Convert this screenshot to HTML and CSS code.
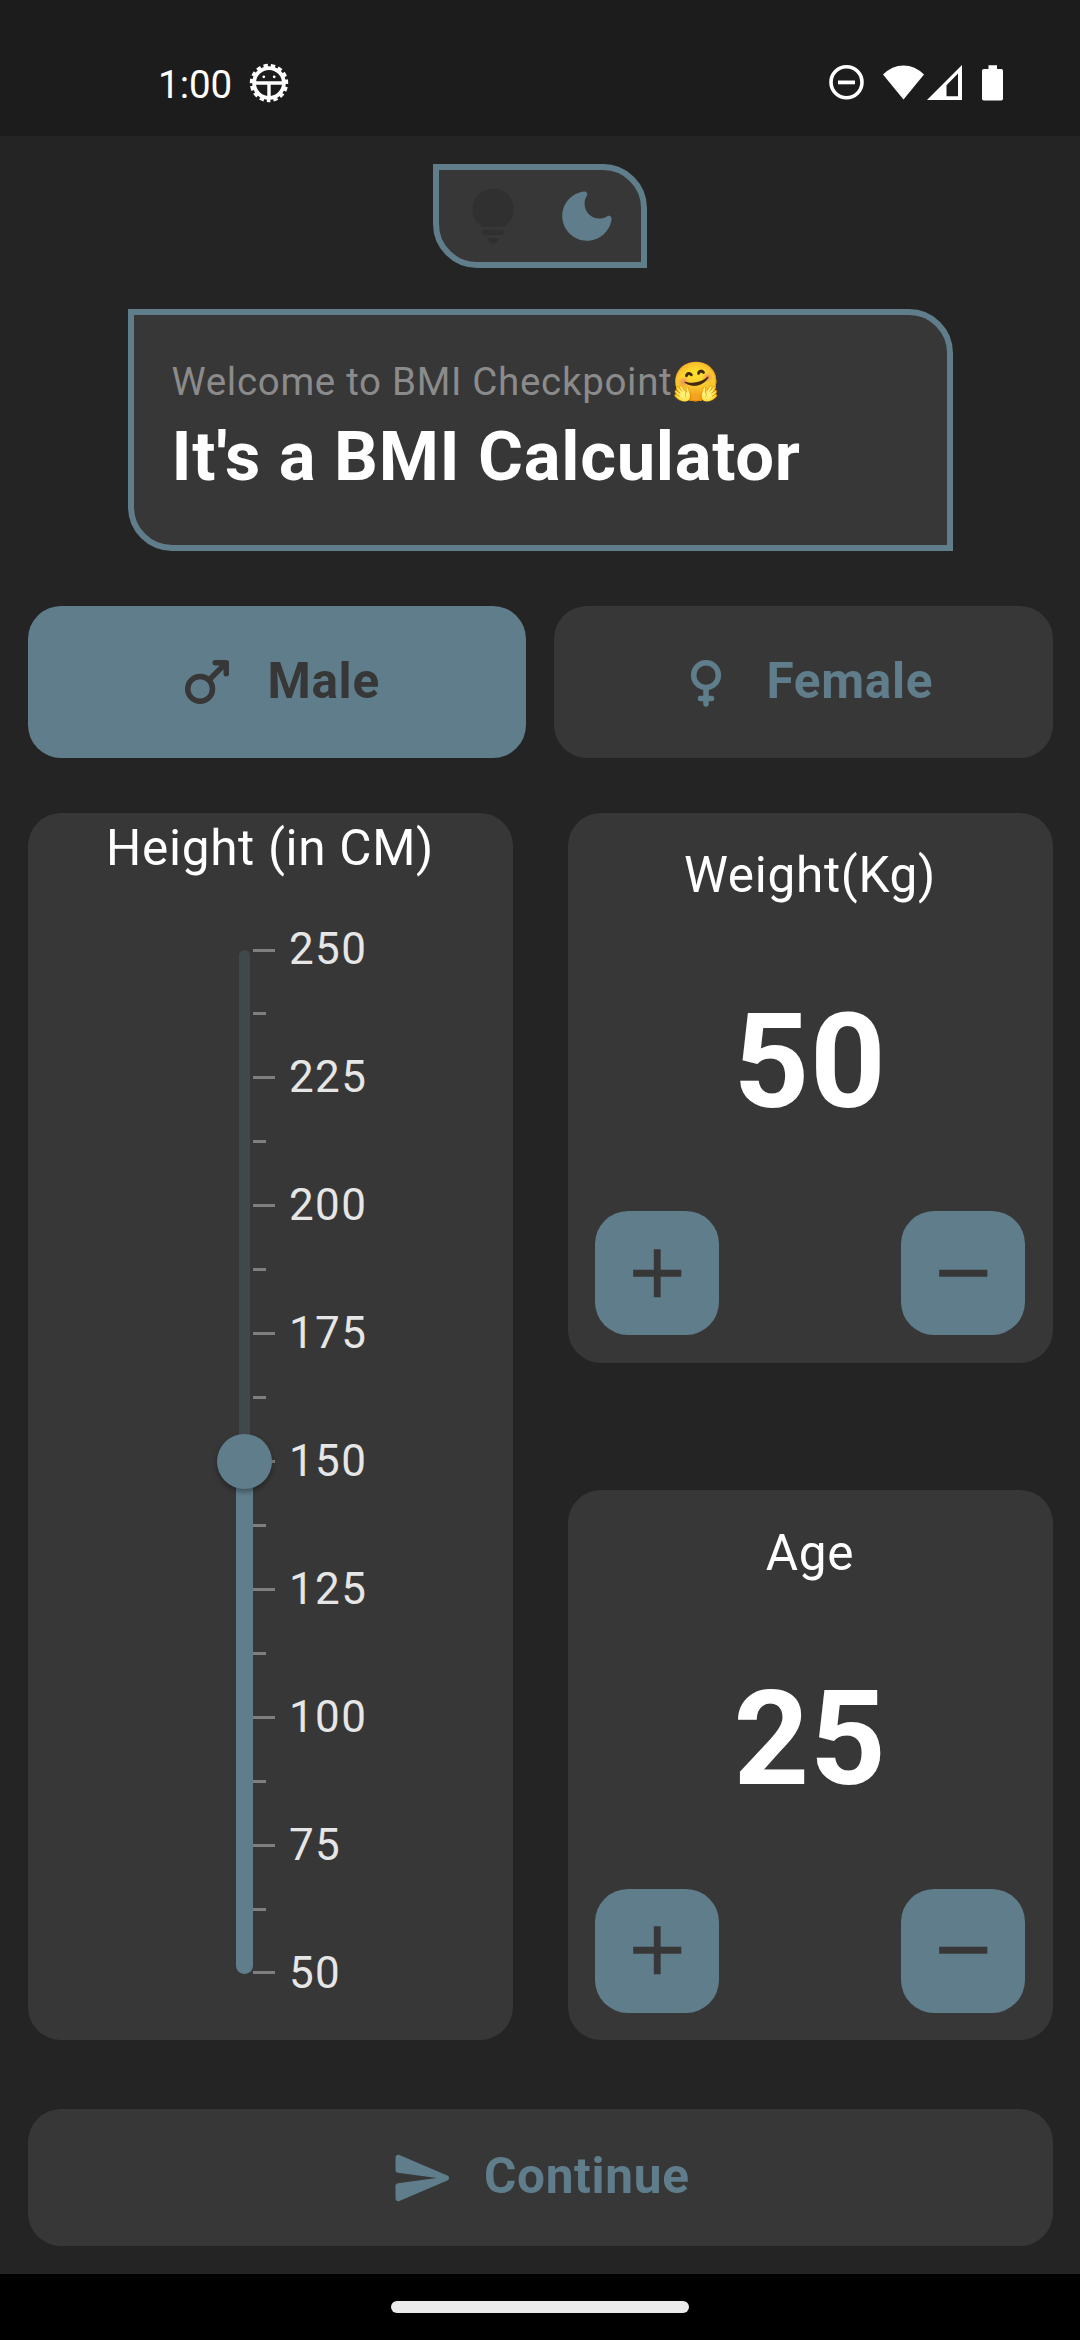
FILE: index.html
```html
<!DOCTYPE html>
<html lang="en">
<head>
<meta charset="utf-8">
<title>BMI Calculator</title>
<link rel="stylesheet" href="styles.css">
</head>
<body>
<header class="status">
  <span class="time">1:00</span>
  <svg class="gear" viewBox="-20 -20 40 40">
    <circle r="14.9" fill="none" stroke="#fff" stroke-width="3.8"/>
    <circle r="17" fill="none" stroke="#fff" stroke-width="4.4" stroke-dasharray="4.2 2.921" stroke-dashoffset="2.1" transform="rotate(90)"/>
    <path d="M-14 0H14M0 0V14" stroke="#fff" stroke-width="3.4" fill="none"/>
    <circle cx="-5.2" cy="-6.2" r="1.4" fill="#fff"/><circle cx="5.2" cy="-6.2" r="1.4" fill="#fff"/>
  </svg>
  <svg class="indicators" viewBox="0 0 178 40">
    <circle cx="18.5" cy="20.3" r="15.5" fill="none" stroke="#fff" stroke-width="3.6"/>
    <path d="M10 20.4H27" stroke="#fff" stroke-width="3.8"/>
    <path d="M55 12.5Q64 3.4 75.5 3.4T96 12.5L75.5 37.6Z" fill="#fff"/>
    <path fill-rule="evenodd" d="M99 38L134 3V38ZM118.5 23.2V34.3H130V11.5Z" fill="#fff"/>
    <path d="M160.5 3.3H169V7H173.3Q175 7 175 8.8V36.8Q175 38.6 173.3 38.6H155.8Q154 38.6 154 36.8V8.8Q154 7 155.8 7H160.5Z" fill="#fff"/>
  </svg>
</header>

<main class="screen">
  <div class="theme">
    <svg class="icon off" viewBox="0 0 24 24"><path d="M12 22c1.1 0 2-.9 2-2h-4c0 1.1.9 2 2 2zM9 19h6c.55 0 1-.45 1-1s-.45-1-1-1H9c-.55 0-1 .45-1 1s.45 1 1 1zM12 2a7.5 7.5 0 0 0-7.5 7.5c0 3.82 2.66 5.86 3.77 6.5h7.46c1.11-.64 3.77-2.68 3.77-6.5A7.5 7.5 0 0 0 12 2z"/></svg>
    <svg class="icon" viewBox="0 0 24 24"><path d="M11.01 3.05C6.51 3.54 3 7.36 3 12c0 4.97 4.03 9 9 9 4.63 0 8.45-3.5 8.95-8 .09-.79-.78-1.42-1.54-.95-.84.54-1.84.85-2.91.85-2.98 0-5.4-2.42-5.4-5.4 0-1.06.31-2.06.84-2.89.45-.67-.04-1.63-.93-1.56z"/></svg>
  </div>

  <section class="hello">
    <p class="welcome">Welcome to BMI Checkpoint<span class="emoji">🤗</span></p>
    <h1 class="title">It's a BMI Calculator</h1>
  </section>

  <div class="genders">
    <button class="gender selected">
      <svg class="icon line" viewBox="0 0 24 24"><circle cx="9.5" cy="14.5" r="4.5"/><path d="M13 11L18.6 5.4"/><path d="M15 5H19V9"/></svg>
      <span class="caption">Male</span>
    </button>
    <button class="gender">
      <svg class="icon line" viewBox="0 0 24 24"><circle cx="12" cy="9.5" r="4.5"/><path d="M12 14.5V20M10 18H14"/></svg>
      <span class="caption">Female</span>
    </button>
  </div>

  <div class="measures">
    <section class="card height">
      <h2 class="label">Height (in CM)</h2>
      <div class="slider">
        <div class="rail"><div class="fill" style="height:50%"></div><div class="thumb" style="bottom:50%"></div></div>
        <ol class="scale">
          <li>250</li><li></li><li>225</li><li></li><li>200</li><li></li><li>175</li><li></li><li>150</li><li></li><li>125</li><li></li><li>100</li><li></li><li>75</li><li></li><li>50</li>
        </ol>
      </div>
    </section>
    <div class="counters">
      <section class="card counter">
        <h2 class="label">Weight(Kg)</h2>
        <div class="value">50</div>
        <div class="steps">
          <button class="step"><svg class="add" viewBox="0 0 24 24"><path d="M19 13h-6v6h-2v-6H5v-2h6V5h2v6h6z"/></svg></button>
          <button class="step"><svg class="add" viewBox="0 0 24 24"><path d="M19 13H5v-2h14z"/></svg></button>
        </div>
      </section>
      <section class="card counter">
        <h2 class="label">Age</h2>
        <div class="value">25</div>
        <div class="steps">
          <button class="step"><svg class="add" viewBox="0 0 24 24"><path d="M19 13h-6v6h-2v-6H5v-2h6V5h2v6h6z"/></svg></button>
          <button class="step"><svg class="add" viewBox="0 0 24 24"><path d="M19 13H5v-2h14z"/></svg></button>
        </div>
      </section>
    </div>
  </div>

  <button class="continue">
    <svg class="icon" viewBox="0 0 24 24"><path d="M3.4 20.4l17.45-7.48c.81-.35.81-1.49 0-1.84L3.4 3.6c-.66-.29-1.39.2-1.39.91L2 9.12c0 .5.37.93.87.99L17 12 2.87 13.88c-.5.07-.87.5-.87 1l.01 4.61c0 .71.73 1.2 1.39.91z"/></svg>
    <span class="caption">Continue</span>
  </button>
</main>

<footer class="nav"><div class="pill"></div></footer>
</body>
</html>
```

FILE: styles.css
```css
:root {
  --bg: #242424;
  --card: #373737;
  --accent: #607d8b;
}
* { box-sizing: border-box; }
body {
  margin: 0;
  width: 1080px;
  height: 2340px;
  display: flex;
  flex-direction: column;
  overflow: hidden;
  background: var(--bg);
  color: #fff;
  font-family: Roboto, "Liberation Sans", sans-serif;
}
h1, h2, p, ol { margin: 0; padding: 0; }
button {
  border: 0;
  padding: 0;
  font: 700 49.5px/58px Roboto, "Liberation Sans", sans-serif;
  letter-spacing: .6875px;
}
svg { display: block; flex: none; }
.icon { width: 66px; height: 66px; fill: var(--accent); }
.off { fill: #303030; }
.line {
  fill: none;
  stroke: currentColor;
  stroke-width: 2;
  stroke-linecap: round;
  stroke-linejoin: round;
}
.caption { padding-bottom: 2.5px; }

.status {
  flex: none;
  height: 136px;
  display: flex;
  align-items: flex-start;
  padding: 62px 74px 0 158px;
  background: #1c1c1c;
}
.time { font-size: 38.5px; line-height: 45px; width: 91.3px; }
.gear { width: 40px; height: 40px; margin-top: 1.3px; }
.indicators { width: 178px; height: 40px; margin-left: auto; }

.screen {
  flex: none;
  height: 2138px;
  display: flex;
  flex-direction: column;
  align-items: center;
  padding: 27.5px 27.5px 0;
}
.theme {
  display: flex;
  justify-content: space-between;
  align-items: center;
  width: 214.5px;
  height: 104.5px;
  padding: 0 21px;
  background: var(--card);
  border: 6px solid var(--accent);
  border-radius: 0 44px 0 44px;
}
.hello {
  width: 825px;
  height: 242px;
  margin-top: 41.25px;
  padding: 39px 38px 0;
  background: var(--card);
  border: 6px solid var(--accent);
  border-radius: 0 44px 0 44px;
}
.welcome {
  color: #8b8b8b;
  font-size: 38.5px;
  line-height: 55px;
  height: 55px;
  letter-spacing: .6875px;
  white-space: nowrap;
}
.emoji { font-family: "Noto Color Emoji", sans-serif; }
.title {
  margin-top: 7px;
  font-size: 68.75px;
  line-height: 82px;
  font-weight: 700;
  letter-spacing: .6875px;
}

.genders {
  display: grid;
  grid-template-columns: 1fr 1fr;
  gap: 27.5px;
  width: 100%;
  height: 151.25px;
  margin-top: 55px;
}
.gender {
  display: flex;
  align-items: center;
  justify-content: center;
  gap: 27.5px;
  border-radius: 33px;
  background: var(--card);
  color: var(--accent);
}
.selected { background: var(--accent); color: var(--card); }

.measures {
  display: grid;
  grid-template-columns: 1fr 1fr;
  gap: 55px;
  width: 100%;
  height: 1227.5px;
  margin-top: 55px;
}
.card { background: var(--card); border-radius: 33px; }
.label {
  text-align: center;
  font-size: 49.5px;
  line-height: 71.5px;
  font-weight: 400;
  letter-spacing: .6875px;
}
.height, .slider { isolation: isolate; }
.slider { display: flex; padding: 65.75px 0 0 208.5px; }
.rail {
  position: relative;
  width: 16.5px;
  height: 1024px;
  display: flex;
  flex-direction: column;
  justify-content: flex-end;
}
.rail::before {
  content: "";
  flex: 1;
  width: 11px;
  margin: 0 auto;
  background: #41484b;
  border-radius: 5.5px 5.5px 0 0;
}
.fill { background: var(--accent); border-radius: 0 0 8.25px 8.25px; }
.thumb {
  position: absolute;
  left: -19.25px;
  width: 55px;
  height: 55px;
  margin-bottom: -27.5px;
  border-radius: 50%;
  background: var(--accent);
  box-shadow: 0 3px 5px rgba(0, 0, 0, .35);
}
.scale {
  position: relative;
  z-index: -1;
  margin-top: -32px;
  list-style: none;
}
.scale li {
  display: flex;
  align-items: center;
  gap: 14.5px;
  height: 64px;
  padding-bottom: 2px;
  color: #e6e6e6;
  font-size: 44px;
  line-height: 52px;
  letter-spacing: 1.375px;
}
.scale li::before {
  content: "";
  width: 22px;
  height: 3px;
  margin-top: 2px;
  background: #7f7f7f;
}
.scale li:nth-child(even)::before { width: 13.75px; }
.scale li:first-child::before { margin-top: 4px; }
.scale li:last-child::before { margin-top: 0; }

.counters { display: flex; flex-direction: column; justify-content: space-between; }
.counter { height: 550px; padding: 27.5px 27.5px 0; }
.value {
  height: 299.75px;
  text-align: center;
  font-size: 132px;
  line-height: 300px;
  font-weight: 700;
  letter-spacing: .6875px;
}
.steps { display: flex; justify-content: space-between; }
.step {
  display: flex;
  align-items: center;
  justify-content: center;
  width: 123.75px;
  height: 123.75px;
  border-radius: 33px;
  background: var(--accent);
}
.add { width: 82.5px; height: 82.5px; fill: var(--card); }

.continue {
  display: flex;
  align-items: center;
  justify-content: center;
  gap: 27.5px;
  width: 100%;
  height: 137.5px;
  margin-top: 68.75px;
  border-radius: 33px;
  background: var(--card);
  color: var(--accent);
}
.nav {
  flex: none;
  height: 66px;
  display: flex;
  align-items: center;
  justify-content: center;
  background: #000;
}
.pill { width: 298px; height: 12px; border-radius: 6px; background: #ebebeb; }
```
